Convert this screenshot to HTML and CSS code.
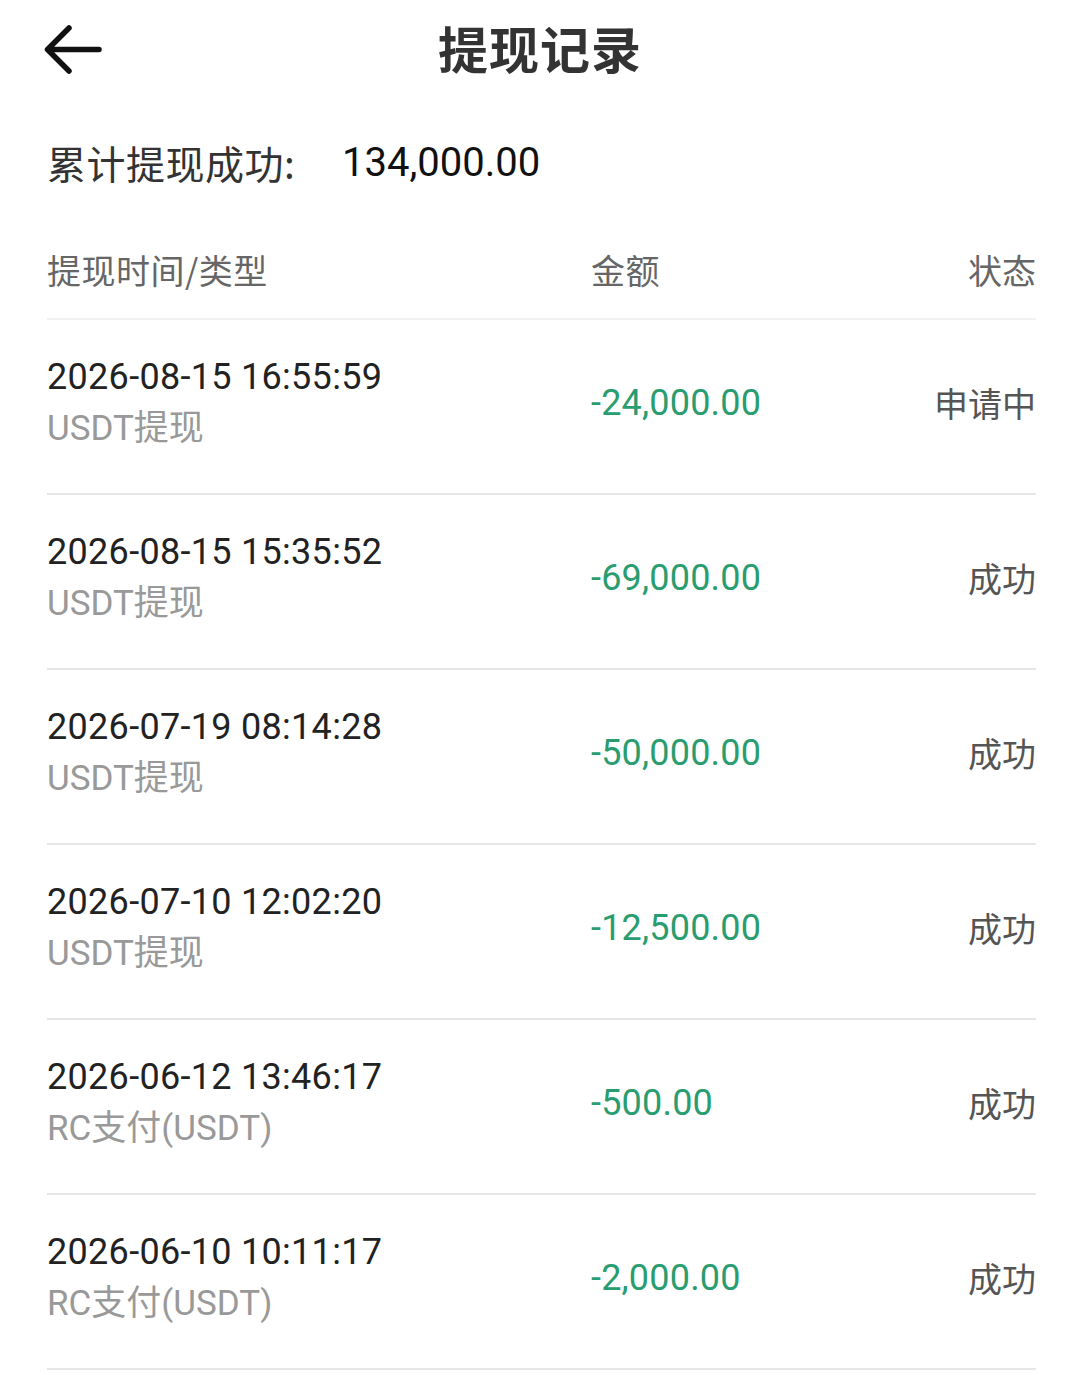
FILE: index.html
```html
<!DOCTYPE html>
<html lang="zh-CN">
<head>
<meta charset="utf-8">
<title>提现记录</title>
<link rel="stylesheet" href="styles.css">
</head>
<body>
<div class="page">
  <header class="topbar">
    <span class="back">
      <svg width="60" height="50" viewBox="0 0 60 50"><path d="M55 24.5H4M25 3L3.5 24.5 25 46" fill="none" stroke="#111" stroke-width="5.5" stroke-linecap="round" stroke-linejoin="round"/></svg>
    </span>
    <h1 class="title">提现记录</h1>
  </header>

  <div class="summary">
    <span class="summary-label">累计提现成功:</span>
    <span class="summary-value">134,000.00</span>
  </div>

  <div class="table-head">
    <span class="col-time">提现时间/类型</span>
    <span class="col-amount">金额</span>
    <span class="col-status">状态</span>
  </div>

  <ul class="records">
    <li class="record">
      <div class="col-time"><div class="date">2026-08-15 16:55:59</div><div class="type">USDT提现</div></div>
      <div class="col-amount amount">-24,000.00</div>
      <div class="col-status status">申请中</div>
    </li>
    <li class="record">
      <div class="col-time"><div class="date">2026-08-15 15:35:52</div><div class="type">USDT提现</div></div>
      <div class="col-amount amount">-69,000.00</div>
      <div class="col-status status">成功</div>
    </li>
    <li class="record">
      <div class="col-time"><div class="date">2026-07-19 08:14:28</div><div class="type">USDT提现</div></div>
      <div class="col-amount amount">-50,000.00</div>
      <div class="col-status status">成功</div>
    </li>
    <li class="record">
      <div class="col-time"><div class="date">2026-07-10 12:02:20</div><div class="type">USDT提现</div></div>
      <div class="col-amount amount">-12,500.00</div>
      <div class="col-status status">成功</div>
    </li>
    <li class="record">
      <div class="col-time"><div class="date">2026-06-12 13:46:17</div><div class="type">RC支付(USDT)</div></div>
      <div class="col-amount amount">-500.00</div>
      <div class="col-status status">成功</div>
    </li>
    <li class="record">
      <div class="col-time"><div class="date">2026-06-10 10:11:17</div><div class="type">RC支付(USDT)</div></div>
      <div class="col-amount amount">-2,000.00</div>
      <div class="col-status status">成功</div>
    </li>
  </ul>
</div>
</body>
</html>
```

FILE: styles.css
```css
* { box-sizing: border-box; }
html, body { margin: 0; padding: 0; background: #fff; }
body {
  font-family: Roboto, "Noto Sans CJK SC", sans-serif;
  color: #222;
  width: 1080px;
  overflow: hidden;
}
.page { padding: 0 44px 0 47px; }

.topbar {
  position: relative;
  height: 98px;
  display: flex;
  align-items: center;
  justify-content: center;
}
.back {
  position: absolute;
  left: -3px;
  top: 25px;
  display: flex;
}
.title {
  margin: 0 0 4px -3px;
  font-size: 50px;
  font-weight: 700;
  color: #333;
  font-family: "Noto Sans CJK SC", sans-serif;
  letter-spacing: 1px;
}

.summary {
  height: 132px;
  display: flex;
  align-items: center;
  padding-bottom: 4px;
}
.summary-label {
  font-family: "Noto Sans CJK SC", sans-serif;
  font-size: 39px;
  color: #333;
  width: 295px;
  letter-spacing: 0.5px;
}
.summary-value {
  font-size: 40px;
  color: #111;
}

.table-head, .record {
  display: grid;
  grid-template-columns: 544px 1fr auto;
  align-items: center;
}
.table-head {
  height: 90px;
  padding-bottom: 10px;
  border-bottom: 2px solid #f2f2f2;
  font-family: "Noto Sans CJK SC", sans-serif;
  font-size: 34px;
  color: #666;
  letter-spacing: 0.5px;
}
.col-status { text-align: right; }
.table-head .col-status { letter-spacing: 0; }

.records { list-style: none; margin: 0; padding: 0; }
.record {
  height: 175px;
  border-bottom: 2px solid #e6e6e6;
  padding-bottom: 8px;
}
.date {
  font-size: 36px;
  line-height: 52px;
  color: #222;
  letter-spacing: 0.3px;
}
.type {
  font-size: 35px;
  line-height: 52px;
  color: #999;
}
.amount {
  font-size: 36px;
  color: #2a9d70;
  letter-spacing: 0.2px;
}
.status {
  font-family: "Noto Sans CJK SC", sans-serif;
  font-size: 34px;
  color: #555;
}
```
